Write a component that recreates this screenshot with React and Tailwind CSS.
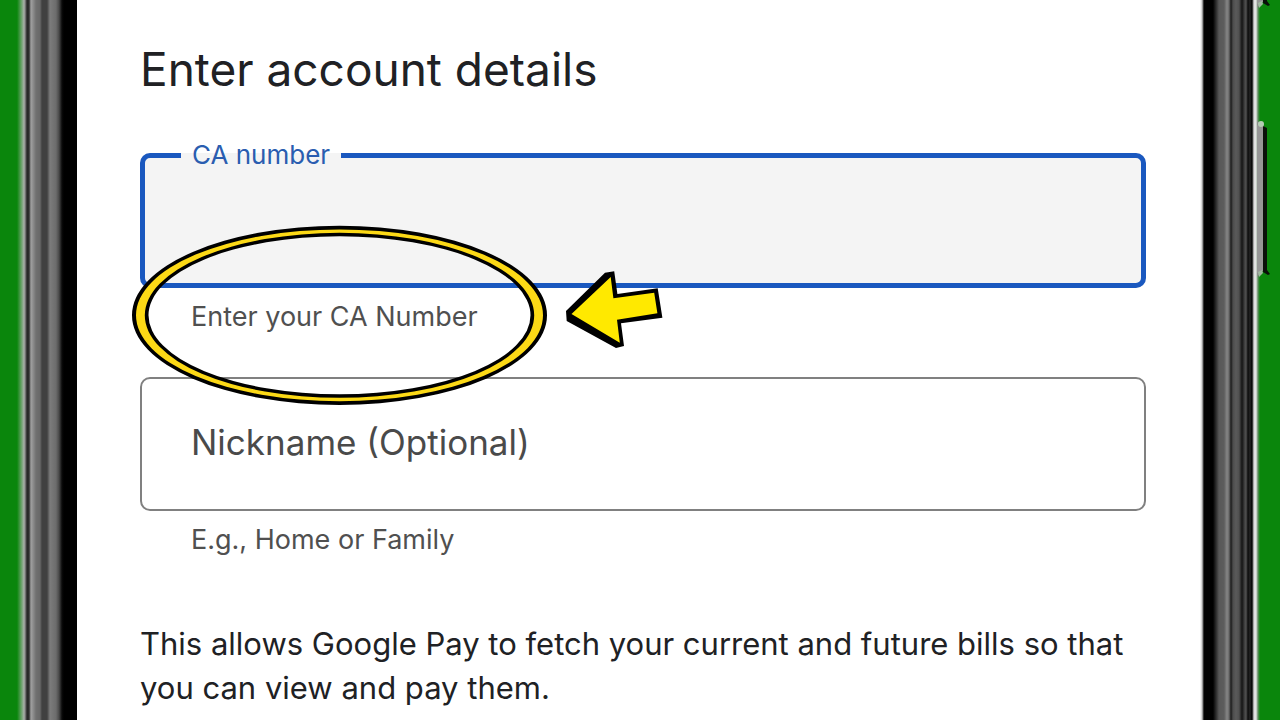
const LeftFrame = () => (
  <div className="w-[77px] shrink-0 bg-[linear-gradient(to_right,#0a860c_17px,#5f9f5f_21px,#a8b0a8_24px,#8a8a8a_25px,#262626_27px,#2e2e2e_29px,#a0a0a0_31px,#8e8e8e_33px,#707070_36px,#686868_40px,#404040_42px,#404040_47px,#7c7c7c_50px,#6c6c6c_56px,#4a4a4a_59px,#0a0a0a_62px,#000_64px,#000_100%)]" />
);

const RightFrame = () => (
  <div className="relative w-20 shrink-0 bg-[linear-gradient(to_right,#fff_0px,#c8c8c8_2px,#000_4px,#000_13px,#2c2c2c_16px,#585858_19px,#5c5c5c_24px,#868686_27px,#6a6a6a_29px,#1c1c1c_31px,#4c4c4c_33px,#5a5a5a_36px,#505050_39px,#141414_42px,#484848_45px,#505050_46px,#0c0c0c_48px,#262626_50px,#000_52px,#dedede_54px,#e6e6e6_56px,#5e8a5e_58px,#0a860c_60px)]">
    <SideButton className="absolute left-14 -top-[148px]" />
    <SideButton className="absolute left-14 top-[121px]" />
  </div>
);

// Volume / power key on the edge of the phone
const SideButton = ({ className }) => (
  <svg className={className} width="16" height="156" viewBox="0 0 16 156">
    <path d="M1 0L8 5V148L1 156Z" fill="#8c8c8c" />
    <path d="M7 5L11 7V149L14 153L12 154L7 151Z" fill="#0a0f0a" />
    <path d="M1 4L7 6V150L1 152Z" fill="#969696" />
    <circle cx="5" cy="3" r="3" fill="#b4ccb4" />
    <path d="M2 151L6 149L7 152L3 156Z" fill="#a0b8a0" />
  </svg>
);

const Highlight = () => (
  <svg
    className="absolute -left-2 top-[88px] pointer-events-none"
    width="531"
    height="180"
    viewBox="132 225 531 180"
  >
    <path
      fillRule="evenodd"
      fill="#000"
      d="M132 315.3a207.5 89.6 0 1 0 415 0a207.5 89.6 0 1 0 -415 0ZM148.5 315.3a191 79 0 1 1 382 0a191 79 0 1 1 -382 0Z"
    />
    <path
      fillRule="evenodd"
      fill="#fcd916"
      d="M136 315.3a203.5 85.9 0 1 0 407 0a203.5 85.9 0 1 0 -407 0ZM144.8 315.3a194.7 82.5 0 1 1 389.4 0a194.7 82.5 0 1 1 -389.4 0Z"
    />
    <path
      fill="#000"
      d="M566 311L605 272.7L614.2 271.2L617.4 294L657.7 288.3L662.4 317.7L621 323.3L624 346L616 348L566.7 321Z"
    />
    <path
      fill="#ffe900"
      d="M571.5 314L610.7 277L613.4 298.3L654.2 292.7L657.4 313.3L617 319.7L619.8 342.8Z"
    />
  </svg>
);

export default function App() {
  return (
    <div className="flex min-h-screen bg-white font-['Inter',sans-serif]">
      <LeftFrame />

      <main className="flex-1 min-w-0 pt-[41px] pl-[63px] pr-[54px] text-[#202124]">
        <h1 className="text-[46px] leading-[56px]">Enter account details</h1>

        <form className="relative mt-10">
          {/* CA number */}
          <fieldset className="h-[151px] rounded-[10px] border-[5px] border-[#1a58bf] bg-[#f4f4f4] pl-9">
            <legend className="px-[11px] text-[26px] leading-9 text-[#2a5db0]">
              <label htmlFor="ca-number">CA number</label>
            </legend>
            <input
              id="ca-number"
              type="text"
              aria-describedby="ca-help"
              className="w-full h-20 px-[11px] text-[35px] outline-none"
            />
          </fieldset>
          <p id="ca-help" className="mt-[11px] pl-[51px] text-[27px] leading-9 text-[#505050]">
            Enter your CA Number
          </p>

          {/* Nickname */}
          <input
            type="text"
            aria-label="Nickname (Optional)"
            aria-describedby="nickname-help"
            placeholder="Nickname (Optional)"
            className="block mt-[42px] w-full h-[134px] rounded-[10px] border-2 border-[#808080] pl-[49px] pb-1 text-[35px] outline-none placeholder:text-[#4a4a4a]"
          />
          <p id="nickname-help" className="mt-[11px] pl-[51px] text-[27px] leading-9 text-[#505050]">
            E.g., Home or Family
          </p>

          <Highlight />
        </form>

        <p className="mt-16 text-[31px] leading-[44px]">
          This allows Google Pay to fetch your current and future bills so that you can view and pay them.
        </p>
      </main>

      <RightFrame />
    </div>
  );
}
